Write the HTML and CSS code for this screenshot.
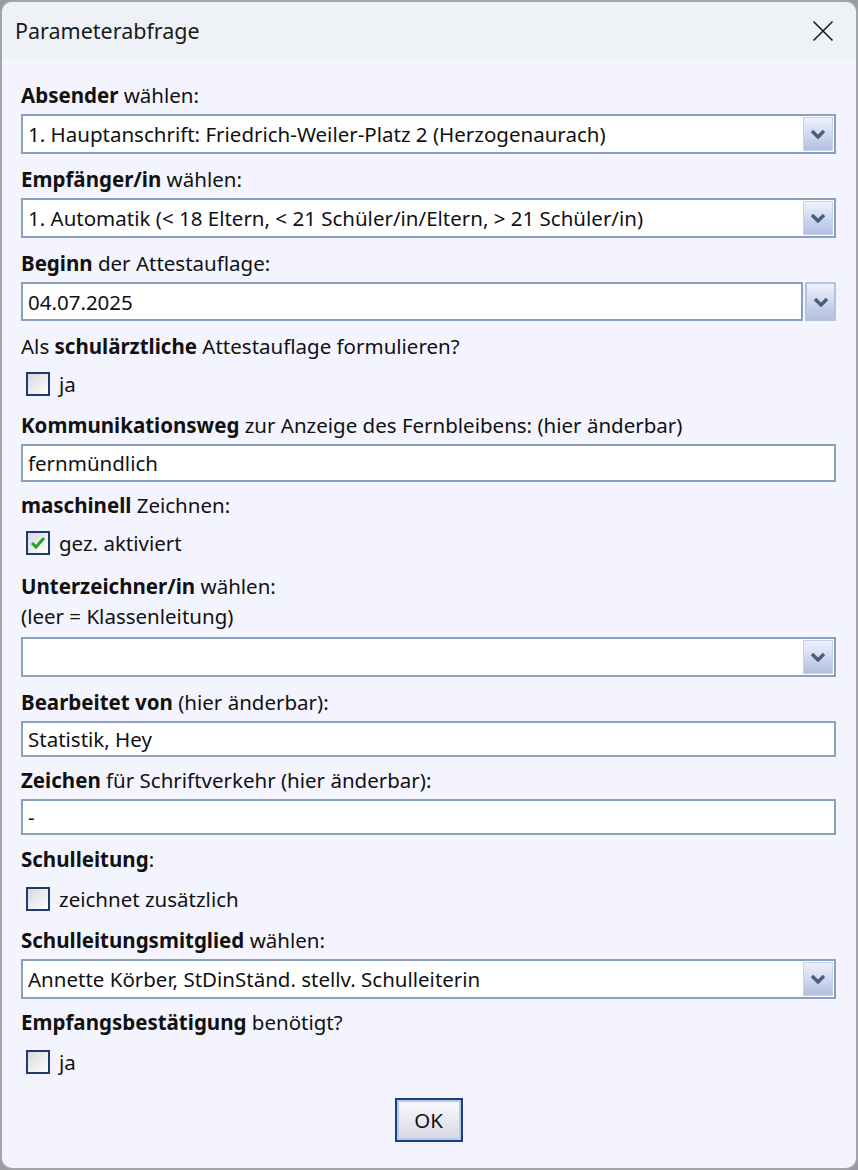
FILE: index.html
```html
<!DOCTYPE html>
<html lang="de">
<head>
<meta charset="utf-8">
<title>Parameterabfrage</title>
<link rel="stylesheet" href="styles.css">
</head>
<body>
<div class="window">
  <div class="titlebar">
    <span class="title">Parameterabfrage</span>
    <svg class="close" width="22" height="22" viewBox="0 0 22 22"><path d="M1.5 1.5 L20.5 20.5 M20.5 1.5 L1.5 20.5" stroke="#1a1a1a" stroke-width="1.6" fill="none"/></svg>
  </div>
  <div class="content">
    <div class="label"><b>Absender</b> wählen:</div>
    <div class="select">
      <span class="value">1. Hauptanschrift: Friedrich-Weiler-Platz 2 (Herzogenaurach)</span>
      <span class="dd"><svg width="16" height="10" viewBox="0 0 16 10"><path d="M2 2 L8 8 L14 2" stroke="#4b5e82" stroke-width="3.4" fill="none"/></svg></span>
    </div>

    <div class="label"><b>Empfänger/in</b> wählen:</div>
    <div class="select">
      <span class="value">1. Automatik (&lt; 18 Eltern, &lt; 21 Schüler/in/Eltern, &gt; 21 Schüler/in)</span>
      <span class="dd"><svg width="16" height="10" viewBox="0 0 16 10"><path d="M2 2 L8 8 L14 2" stroke="#4b5e82" stroke-width="3.4" fill="none"/></svg></span>
    </div>

    <div class="label"><b>Beginn</b> der Attestauflage:</div>
    <div class="daterow">
      <div class="input date">04.07.2025</div>
      <span class="dd ext"><svg width="16" height="10" viewBox="0 0 16 10"><path d="M2 2 L8 8 L14 2" stroke="#4b5e82" stroke-width="3.4" fill="none"/></svg></span>
    </div>

    <div class="label">Als <b>schulärztliche</b> Attestauflage formulieren?</div>
    <div class="check"><span class="box"></span><span>ja</span></div>

    <div class="label"><b>Kommunikationsweg</b> zur Anzeige des Fernbleibens: (hier änderbar)</div>
    <div class="input">fernmündlich</div>

    <div class="label"><b>maschinell</b> Zeichnen:</div>
    <div class="check"><span class="box"><svg width="16" height="14" viewBox="0 0 16 14"><path d="M2 7 L6 11 L14 2" stroke="#22a322" stroke-width="3" fill="none"/></svg></span><span>gez. aktiviert</span></div>

    <div class="label loose"><b>Unterzeichner/in</b> wählen:<br>(leer = Klassenleitung)</div>
    <div class="select low">
      <span class="value"></span>
      <span class="dd"><svg width="16" height="10" viewBox="0 0 16 10"><path d="M2 2 L8 8 L14 2" stroke="#4b5e82" stroke-width="3.4" fill="none"/></svg></span>
    </div>

    <div class="label"><b>Bearbeitet von</b> (hier änderbar):</div>
    <div class="input short">Statistik, Hey</div>

    <div class="label"><b>Zeichen</b> für Schriftverkehr (hier änderbar):</div>
    <div class="input short">-</div>

    <div class="label after-short"><b>Schulleitung</b>:</div>
    <div class="check roomy"><span class="box"></span><span>zeichnet zusätzlich</span></div>

    <div class="label"><b>Schulleitungsmitglied</b> wählen:</div>
    <div class="select">
      <span class="value">Annette Körber, StDinStänd. stellv. Schulleiterin</span>
      <span class="dd"><svg width="16" height="10" viewBox="0 0 16 10"><path d="M2 2 L8 8 L14 2" stroke="#4b5e82" stroke-width="3.4" fill="none"/></svg></span>
    </div>

    <div class="label tight"><b>Empfangsbestätigung</b> benötigt?</div>
    <div class="check roomy"><span class="box"></span><span>ja</span></div>

    <div class="buttons"><button class="ok">OK</button></div>
  </div>
</div>
</body>
</html>
```
FILE: styles.css
```css
html, body {
  margin: 0;
  padding: 0;
  background: #9a9aa2;
}
body {
  font-family: "Noto Sans", "Open Sans", sans-serif;
  font-size: 20.5px;
  color: #111;
}
.window {
  box-sizing: border-box;
  width: 858px;
  height: 1170px;
  border: 2px solid #a3a3aa;
  border-radius: 12px;
  background: #f4f4fe;
  overflow: hidden;
}
.titlebar {
  height: 56px;
  background: #eef2f7;
  display: flex;
  align-items: center;
  justify-content: space-between;
  padding: 0 22px 0 13px;
}
.title {
  font-size: 21.5px;
  color: #1a1a1a;
}
.close { margin-top: 2px; }
.content {
  padding: 22px 20px 0 19px;
  display: flex;
  flex-direction: column;
}
.label {
  line-height: 30px;
  white-space: nowrap;
}
.label b { font-weight: 700; }
.label + .select, .label + .input, .label + .daterow { margin-top: 4px; }
.select + .label, .daterow + .label { margin-top: 10px; }
.input + .label { margin-top: 8px; }
.check + .label { margin-top: 11px; }
.check + .label.loose { margin-top: 13px; }
.input + .label.after-short { margin-top: 9px; }
.select + .label.tight { margin-top: 8px; }
.label + .check { margin-top: 8px; }
.label + .check.roomy { margin-top: 10px; }
.label + .select.low { margin-top: 6px; }
.select {
  box-sizing: border-box;
  height: 40px;
  border: 2px solid #8ba0bf;
  background: #fff;
  display: flex;
  align-items: center;
  padding: 0 1px 0 5px;
}
.select .value {
  flex: 1;
  white-space: nowrap;
}
.dd {
  box-sizing: border-box;
  width: 30px;
  height: 34px;
  border: 1px solid #c5d1e6;
  background: linear-gradient(#eef2fc, #b2c0e0);
  display: flex;
  align-items: center;
  justify-content: center;
}
.daterow {
  display: flex;
  align-items: stretch;
  gap: 2px;
}
.input {
  box-sizing: border-box;
  height: 38px;
  border: 2px solid #8ba0bf;
  background: #fff;
  display: flex;
  align-items: center;
  padding-left: 5px;
  white-space: nowrap;
}
.input.short { height: 36px; }
.date { flex: 1; height: 39px; }
.dd.ext {
  width: 31px;
  height: 39px;
  border: 2px solid #b4c4de;
}
.check {
  height: 30px;
  display: flex;
  align-items: center;
  gap: 9px;
  padding-left: 5px;
}
.box {
  box-sizing: border-box;
  width: 24px;
  height: 24px;
  border: 2px solid #1d3b6b;
  background: linear-gradient(135deg, #d9d9dd, #ffffff);
  display: flex;
  align-items: center;
  justify-content: center;
}
.buttons {
  display: flex;
  justify-content: center;
  margin-top: 21px;
}
.ok {
  box-sizing: border-box;
  width: 68px;
  height: 44px;
  font-family: inherit;
  font-size: 20.5px;
  color: #111;
  border: 2px solid #1f3f7c;
  box-shadow: inset 0 0 0 2px #b9c9ec;
  background: linear-gradient(#fafafd, #d8d8e6);
  padding: 0;
}
```
